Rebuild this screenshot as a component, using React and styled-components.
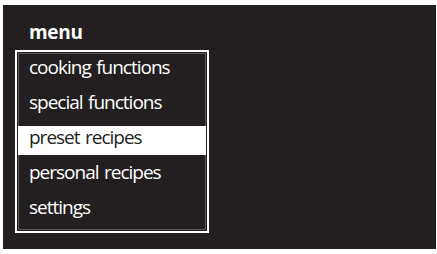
import React from "react";
import styled, { createGlobalStyle } from "styled-components";

const items = [
  "cooking functions",
  "special functions",
  "preset recipes",
  "personal recipes",
  "settings",
];

const Global = createGlobalStyle`
  html, body {
    margin: 0;
    padding: 0;
    background: #ffffff;
  }
`;

const Screen = styled.div`
  margin: 5px 0 0 3px;
  width: 433px;
  height: 244px;
  box-sizing: border-box;
  background-color: #231f20;
  padding: 0 0 0 12px;
  font-family: "Open Sans", "Noto Sans", sans-serif;
  color: #ffffff;
`;

const Title = styled.div`
  font-weight: 700;
  font-size: 19px;
  line-height: 20px;
  letter-spacing: -0.3px;
  height: 45px;
  padding: 17px 0 0 14px;
  box-sizing: border-box;
`;

const List = styled.div`
  width: 194px;
  height: 183px;
  box-sizing: border-box;
  border: 2px solid #ffffff;
  box-shadow: inset 0 0 0 1px #231f20, inset 0 0 0 2px #5a5758;
  padding: 4px 1px;
  display: flex;
  flex-direction: column;
  gap: 6px;
`;

const Item = styled.div`
  height: 29px;
  box-sizing: border-box;
  padding: 1px 0 0 11px;
  line-height: 21px;
  font-size: 19px;
  letter-spacing: -1px;
  word-spacing: 1.5px;
  background: ${(p) => (p.$active ? "#ffffff" : "transparent")};
  color: ${(p) => (p.$active ? "#231f20" : "#ffffff")};
`;

export default function App() {
  return (
    <>
      <Global />
      <Screen>
        <Title>menu</Title>
        <List>
          {items.map((label) => (
            <Item key={label} $active={label === "preset recipes"}>
              {label}
            </Item>
          ))}
        </List>
      </Screen>
    </>
  );
}
